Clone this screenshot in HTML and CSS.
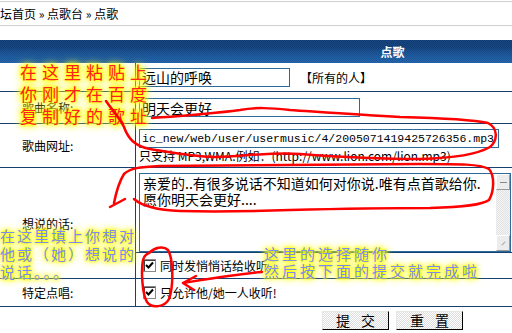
FILE: index.html
```html
<!DOCTYPE html>
<html lang="zh-CN">
<head>
  <meta charset="UTF-8" />
  <meta name="viewport" content="width=device-width, initial-scale=1.0" />
  <title>点歌</title>
  <link rel="stylesheet" href="styles.css">
</head>
<body>
  <div class="crumbs">坛首页 » 点歌台 » 点歌</div>

  <div class="form">
    <div class="form-head">点歌</div>
    <div class="form-grid">
      <div class="label"></div>
      <div class="field">
        <input class="text short" value="远山的呼唤">
        <span class="who">【所有的人】</span>
      </div>

      <div class="label">歌曲名称:</div>
      <div class="field">
        <input class="text mid" value="明天会更好">
      </div>

      <div class="label">歌曲网址:</div>
      <div class="field stack">
        <input class="text url" value="ic_new/web/user/usermusic/4/2005071419425726356.mp3">
        <div class="hint">只支持 MP3,WMA.例如：(http://www.lion.com/lion.mp3)</div>
      </div>

      <div class="label tall">想说的话:</div>
      <div class="field top">
        <div class="textbox">
          <div class="tb-text">亲爱的..有很多说话不知道如何对你说.唯有点首歌给你.
愿你明天会更好....</div>
          <div class="tb-scroll">
            <span class="sb-btn"><i class="dash"></i></span>
            <span class="sb-track"></span>
            <span class="sb-btn"><i class="grip"></i></span>
          </div>
        </div>
      </div>
      <div class="field check-row">
        <span class="check"><svg width="11" height="11" viewBox="0 0 11 11"><path d="M2 5 L4.5 7.5 L9 2.5" fill="none" stroke="#000" stroke-width="2"/></svg></span>
        同时发悄悄话给收听
      </div>

      <div class="label">特定点唱:</div>
      <div class="field check-row">
        <span class="check"><svg width="11" height="11" viewBox="0 0 11 11"><path d="M2 5 L4.5 7.5 L9 2.5" fill="none" stroke="#000" stroke-width="2"/></svg></span>
        只允许他/她一人收听!
      </div>
    </div>

    <div class="actions">
      <button class="btn">提 交</button>
      <button class="btn">重 置</button>
    </div>
  </div>

  <!-- 标注 -->
  <div class="memo memo-red">在这里粘贴上<br>你刚才在百度<br>复制好的歌址</div>
  <div class="memo memo-blue memo-left">在这里填上你想对<br>他或（她）想说的<br>说话。。。</div>
  <div class="memo memo-blue memo-right">这里的选择随你<br>然后按下面的提交就完成啦</div>

  <svg class="scribble" width="512" height="333" viewBox="0 0 512 333">
    <g fill="none" stroke="#f00" stroke-width="2.5" stroke-linecap="round" stroke-linejoin="round">
      <path d="M106,101 C112,110 120,118 124,127 C128,138 134,146 150,149 C170,152 188,156 215,157 C245,156 275,152 300,154 C340,157 380,159 420,159 C455,158 478,154 490,147 C498,140 498,128 488,123 C470,119 440,118 400,117 C360,115 320,112 290,110 C270,108 256,107 240,110 C210,114 180,116 152,118"/>
      <path d="M110,207 L125,199 M114,203 C116,193 119,182 124,174 C130,168 140,167 160,166 C230,165 330,165 420,164 C460,164 480,164 489,169 C495,176 494,192 489,200 C482,205 465,207 430,208 C380,208 330,209 290,210 C260,211 220,212 180,211 C155,210 142,206 134,199"/>
      <path d="M149,253 C154,248 163,245 168,250 C173,258 174,285 169,299 C165,307 152,309 147,302 C142,294 141,270 143,260 C144,256 146,254 149,253"/>
      <path d="M262,272 C240,274 215,278 183,283 M183,283 L196,276 M183,283 L194,290"/>
    </g>
  </svg>
</body>
</html>
```

FILE: styles.css
```css
body {
  margin: 0;
  font-family: "Noto Sans CJK SC", sans-serif;
  font-size: 12px;
  color: #000;
  background-color: #fff;
  position: relative;
  width: 512px;
  height: 333px;
  overflow: hidden;
}

.crumbs {
  margin-top: 1px;
  height: 23px;
  line-height: 23px;
  border-top: 1px solid #cfcfcf;
  border-bottom: 1px solid #cfcfcf;
  white-space: nowrap;
}

.form-head {
  margin-top: 14px;
  height: 23px;
  line-height: 23px;
  padding-left: 273px;
  text-align: center;
  color: #fff;
  font-weight: bold;
  background:
    repeating-conic-gradient(rgba(255,255,255,0.07) 0 25%, transparent 0 50%) 0 0 / 2px 2px,
    linear-gradient(#0b3a75 0, #0b3a75 30%, #134c8e 55%, #1b5ca5 100%);
}

.form-grid {
  display: grid;
  grid-template-columns: 136px 1fr;
  grid-template-rows: 29px 32px 44px 85px 26px 28px;
}

.label {
  display: flex;
  align-items: center;
  padding-left: 22px;
  border-right: 1px solid #17406f;
  border-bottom: 1px solid #17406f;
}

.label.tall {
  grid-row: span 2;
}

.field {
  display: flex;
  align-items: center;
  padding-left: 3px;
  border-bottom: 1px solid #17406f;
  white-space: nowrap;
}

.field.stack {
  flex-direction: column;
  align-items: flex-start;
  padding-top: 5px;
}

.field.top {
  align-items: flex-start;
  padding-top: 5px;
}

.text {
  box-sizing: border-box;
  height: 19px;
  margin: 0;
  padding: 0 2px;
  border: 1px solid #2b6a9a;
  background: #fff;
  font-family: "Noto Sans CJK SC", sans-serif;
  font-size: 14px;
  color: #000;
  outline: none;
}

.short { width: 151px; }
.mid { width: 221px; }

.url {
  width: 360px;
  font-family: "Liberation Mono", monospace;
  font-size: 11.5px;
}

.who {
  margin-left: 10px;
}

.hint {
  line-height: 13px;
  margin-top: 1px;
}

.textbox {
  box-sizing: border-box;
  display: flex;
  width: 372px;
  height: 79px;
  border: 1px solid #2b6a9a;
}

.tb-text {
  flex: 1;
  padding: 1px 3px;
  font-size: 14px;
  line-height: 16px;
  white-space: pre-line;
}

.tb-scroll {
  width: 14px;
  display: flex;
  flex-direction: column;
  background: repeating-conic-gradient(#f4f4f4 0 25%, #e2e2e2 0 50%) 0 0 / 2px 2px;
}

.sb-btn {
  box-sizing: border-box;
  height: 16px;
  display: flex;
  align-items: center;
  justify-content: center;
  background: #ececec;
  border: 1px solid;
  border-color: #fff #9a9a9a #9a9a9a #fff;
}

.sb-track {
  flex: 1;
}

.dash {
  width: 7px;
  height: 1px;
  background: #8a8a8a;
}

.grip {
  width: 5px;
  height: 1px;
  background: #a0a0a0;
  transform: rotate(-45deg);
}

.check-row {
  padding-left: 7px;
}

.check {
  box-sizing: border-box;
  width: 13px;
  height: 13px;
  margin-right: 4px;
  display: inline-flex;
  align-items: center;
  justify-content: center;
  background: #fff;
  border: 1px solid #8a8a8a;
  box-shadow: inset 1px 1px #404040;
}

.actions {
  display: flex;
  justify-content: center;
  gap: 7px;
  padding-left: 273px;
  margin-top: 4px;
}

.btn {
  box-sizing: border-box;
  width: 67px;
  height: 19px;
  padding: 0;
  border: 1px solid;
  border-color: #e6e6e6 #000 #000 #e6e6e6;
  background: repeating-conic-gradient(#fff 0 25%, #dcdcdc 0 50%) 0 0 / 2px 2px;
  font-family: "Noto Sans CJK SC", sans-serif;
  font-size: 14px;
  line-height: 17px;
  letter-spacing: 4px;
  text-indent: 4px;
  color: #000;
}

/* 手写标注 */
.memo {
  position: absolute;
  white-space: nowrap;
  z-index: 1;
}

.memo-red {
  left: 20px;
  top: 61px;
  font-size: 17px;
  line-height: 22px;
  letter-spacing: 5px;
  color: #ff2020;
  text-shadow: 0 0 2px #ff0, 0 0 3px #ff0, 0 0 5px #ff0, 0 0 7px #ff0, 0 0 9px #ff0, 0 0 12px #ffff40;
}

.memo-blue {
  font-size: 15px;
  color: #7a8cee;
  text-shadow: 0 0 2px #ff0, 0 0 3px #ff0, 0 0 5px #ff0, 0 0 7px #ff0, 0 0 10px #ffff40;
}

.memo-left {
  left: 0;
  top: 227px;
  line-height: 18px;
  letter-spacing: 2px;
}

.memo-right {
  left: 264px;
  top: 245px;
  line-height: 17px;
  letter-spacing: 3px;
}

.scribble {
  position: absolute;
  left: 0;
  top: 0;
  z-index: 2;
  pointer-events: none;
}
```
